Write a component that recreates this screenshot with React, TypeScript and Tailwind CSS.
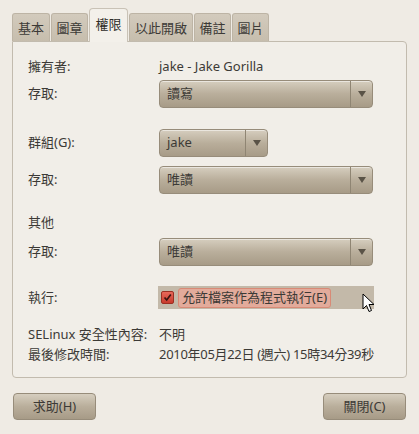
import React from "react";

const font = { fontFamily: '"Noto Sans", "Noto Sans CJK TC", sans-serif' };

function Combo({ text, width }: { text: string; width: string }) {
  return (
    <div
      className={`${width} h-[28px] flex items-stretch rounded-[4px] border border-[#978c7a] bg-gradient-to-b from-[#d6cebf] via-[#b9ae9b] to-[#a79b87] shadow-[inset_0_1px_0_rgba(255,255,255,0.5)]`}
    >
      <div className="flex-1 flex items-center pl-[7px] text-[13px] text-[#3c3a36]">{text}</div>
      <div className="w-[22px] border-l border-[#8f8573] flex items-center justify-center">
        <svg width="8" height="6" viewBox="0 0 8 6">
          <path d="M0 0 L8 0 L4 6 Z" fill="#5a5347" />
        </svg>
      </div>
    </div>
  );
}

function Label({ children }: { children: React.ReactNode }) {
  return <div className="w-[131px] shrink-0 text-[13px] text-[#3c3a36]">{children}</div>;
}

function Tab({ text, active, w }: { text: string; active?: boolean; w: string }) {
  if (active) {
    return (
      <div
        className={`${w} h-[34px] -mb-px relative z-10 flex items-center justify-center rounded-t-[4px] border border-b-0 border-[#c9c2b6] bg-[#f3f0ea] text-[13px] text-[#2e2c28] pb-[2px]`}
      >
        {text}
      </div>
    );
  }
  return (
    <div
      className={`${w} h-[28px] flex items-center justify-center rounded-t-[3px] border border-b-0 border-[#bdb4a5] bg-gradient-to-b from-[#d3cbbd] to-[#c6bdad] text-[13px] text-[#3c3a36] pt-[2px]`}
    >
      {text}
    </div>
  );
}

export default function App() {
  return (
    <div className="w-[419px] h-[434px] bg-[#efebe4] relative overflow-hidden" style={font}>
      <div className="pl-[12px] pt-[8px] flex items-end gap-[1px]">
        <Tab text="基本" w="w-[38px]" />
        <Tab text="圖章" w="w-[37px]" />
        <Tab text="權限" w="w-[39px]" active />
        <Tab text="以此開啟" w="w-[64px]" />
        <Tab text="備註" w="w-[37px]" />
        <Tab text="圖片" w="w-[37px]" />
      </div>
      <div className="mx-[12px] w-[395px] h-[337px] border border-[#c2bbae] rounded-b-[4px] rounded-tr-[4px] bg-[#f1eee8] pl-[15px] pt-[15px]">
        <div className="flex items-center h-[20px]">
          <Label>擁有者:</Label>
          <div className="text-[13px] text-[#3c3a36]">jake - Jake Gorilla</div>
        </div>
        <div className="flex items-center mt-[3px]">
          <Label>存取:</Label>
          <Combo text="讀寫" width="w-[214px]" />
        </div>
        <div className="flex items-center mt-[21px]">
          <Label>群組(G):</Label>
          <Combo text="jake" width="w-[109px]" />
        </div>
        <div className="flex items-center mt-[9px]">
          <Label>存取:</Label>
          <Combo text="唯讀" width="w-[214px]" />
        </div>
        <div className="flex items-center h-[20px] mt-[19px]">
          <Label>其他</Label>
        </div>
        <div className="flex items-center mt-[5px]">
          <Label>存取:</Label>
          <Combo text="唯讀" width="w-[214px]" />
        </div>
        <div className="flex items-center mt-[20px]">
          <Label>執行:</Label>
          <div className="-ml-px w-[216px] h-[23px] bg-[#c3b9a9] flex items-center pl-[3px]">
            <div className="w-[13px] h-[13px] rounded-[2px] border border-[#9c2f22] bg-gradient-to-b from-[#e8685a] to-[#c8392b] flex items-center justify-center">
              <svg width="9" height="9" viewBox="0 0 9 9">
                <path d="M1.5 4.5 L3.7 7 L7.8 1.5" stroke="#3a1410" strokeWidth="1.7" fill="none" />
              </svg>
            </div>
            <div className="ml-[4px] h-[20px] px-[3px] flex items-center rounded-[3px] border border-[#d88a76] bg-[#e2ab9b] text-[13px] text-[#3c3a36]">
              允許檔案作為程式執行(E)
            </div>
          </div>
        </div>
        <div className="flex items-center h-[20px] mt-[16px]">
          <Label>SELinux 安全性內容:</Label>
          <div className="text-[13px] text-[#3c3a36]">不明</div>
        </div>
        <div className="flex items-center h-[20px]">
          <Label>最後修改時間:</Label>
          <div className="text-[13px] text-[#3c3a36] tracking-[-0.3px]">2010年05月22日 (週六) 15時34分39秒</div>
        </div>
      </div>
      <div className="flex justify-between px-[13px] mt-[15px]">
        <div className="w-[83px] h-[27px] rounded-[4px] border border-[#978c7a] bg-gradient-to-b from-[#d6cebf] via-[#b9ae9b] to-[#a79b87] flex items-center justify-center text-[13px] text-[#3c3a36]">
          求助(H)
        </div>
        <div className="w-[83px] h-[27px] rounded-[4px] border border-[#978c7a] bg-gradient-to-b from-[#d6cebf] via-[#b9ae9b] to-[#a79b87] flex items-center justify-center text-[13px] text-[#3c3a36]">
          關閉(C)
        </div>
      </div>
      <svg className="absolute left-[362px] top-[293px]" width="14" height="21" viewBox="0 0 14 21">
        <path d="M1 1 L1 16 L4.5 12.5 L7 18.5 L9.5 17.5 L7 11.5 L12 11.5 Z" fill="#fff" stroke="#000" strokeWidth="1" strokeLinejoin="round" />
      </svg>
    </div>
  );
}
